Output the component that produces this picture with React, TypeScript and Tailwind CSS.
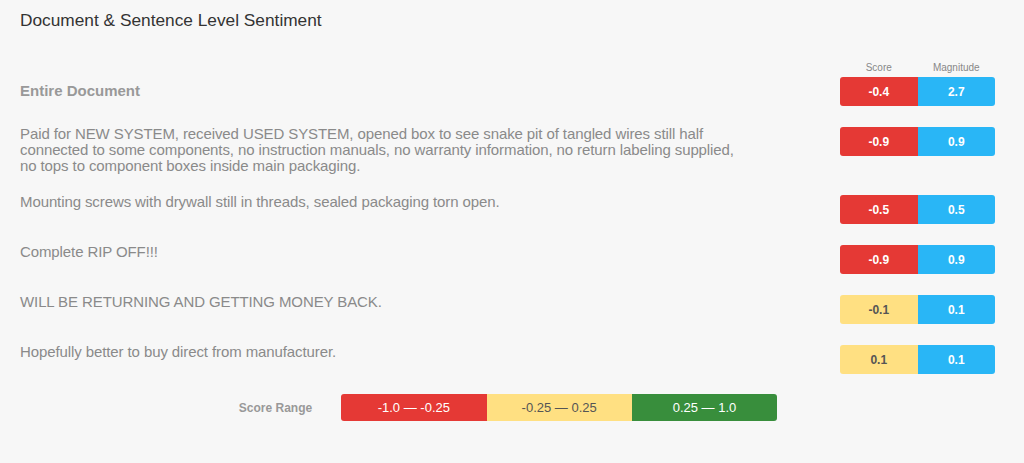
import React from 'react'

type Row = {
  text: string
  score: number
  magnitude: number
}

const rows: Row[] = [
  {
    text: 'Paid for NEW SYSTEM, received USED SYSTEM, opened box to see snake pit of tangled wires still half connected to some components, no instruction manuals, no warranty information, no return labeling supplied, no tops to component boxes inside main packaging.',
    score: -0.9,
    magnitude: 0.9,
  },
  { text: 'Mounting screws with drywall still in threads, sealed packaging torn open.', score: -0.5, magnitude: 0.5 },
  { text: 'Complete RIP OFF!!!', score: -0.9, magnitude: 0.9 },
  { text: 'WILL BE RETURNING AND GETTING MONEY BACK.', score: -0.1, magnitude: 0.1 },
  { text: 'Hopefully better to buy direct from manufacturer.', score: 0.1, magnitude: 0.1 },
]

const scoreClass = (score: number) => {
  if (score < -0.25) return 'bg-[#e53935] text-white'
  if (score > 0.25) return 'bg-[#388e3c] text-white'
  return 'bg-[#ffe082] text-[#555]'
}

const Badges = ({ score, magnitude }: { score: number, magnitude: number }) => (
  <div className="flex w-[155px] h-[29px] rounded-[3px] overflow-hidden text-[12px] font-bold shrink-0">
    <div className={`flex-1 flex items-center justify-center ${scoreClass(score)}`}>{score.toFixed(1)}</div>
    <div className="flex-1 flex items-center justify-center bg-[#29b6f6] text-white">{magnitude.toFixed(1)}</div>
  </div>
)

export default function App () {
  return (
    <div className="w-[1024px] h-[463px] bg-[#f7f7f7] font-['Liberation_Sans',Arial,sans-serif] overflow-hidden">
      <div className="pl-5 pr-[29px] pt-[9px]">
        <h2 className="text-[17.3px] leading-[22px] text-[#333]">Document &amp; Sentence Level Sentiment</h2>

        <div className="flex justify-end mt-[31px]">
          <div className="flex w-[155px] text-[10px] leading-[11px] text-[#888]">
            <div className="flex-1 text-center">Score</div>
            <div className="flex-1 text-center">Magnitude</div>
          </div>
        </div>

        <div className="flex items-center justify-between mt-[4px]">
          <div className="text-[15px] font-bold text-[#999]">Entire Document</div>
          <Badges score={-0.4} magnitude={2.7} />
        </div>

        {rows.map((row, i) => (
          <div key={i} className="flex items-start justify-between mt-[21px]">
            <div className="w-[725px] text-[15px] tracking-[-0.1px] leading-[16px] text-[#8a8a8a] -mt-px">{row.text}</div>
            <Badges score={row.score} magnitude={row.magnitude} />
          </div>
        ))}

        <div className="flex items-center justify-center gap-[29px] mt-[20px] ml-px">
          <div className="text-[12px] font-bold text-[#999]">Score Range</div>
          <div className="flex w-[436px] h-[27px] rounded-[3px] overflow-hidden text-[13px]">
            <div className="flex-1 flex items-center justify-center bg-[#e53935] text-white">-1.0 — -0.25</div>
            <div className="flex-1 flex items-center justify-center bg-[#ffe082] text-[#555]">-0.25 — 0.25</div>
            <div className="flex-1 flex items-center justify-center bg-[#388e3c] text-white">0.25 — 1.0</div>
          </div>
        </div>
      </div>
    </div>
  )
}
